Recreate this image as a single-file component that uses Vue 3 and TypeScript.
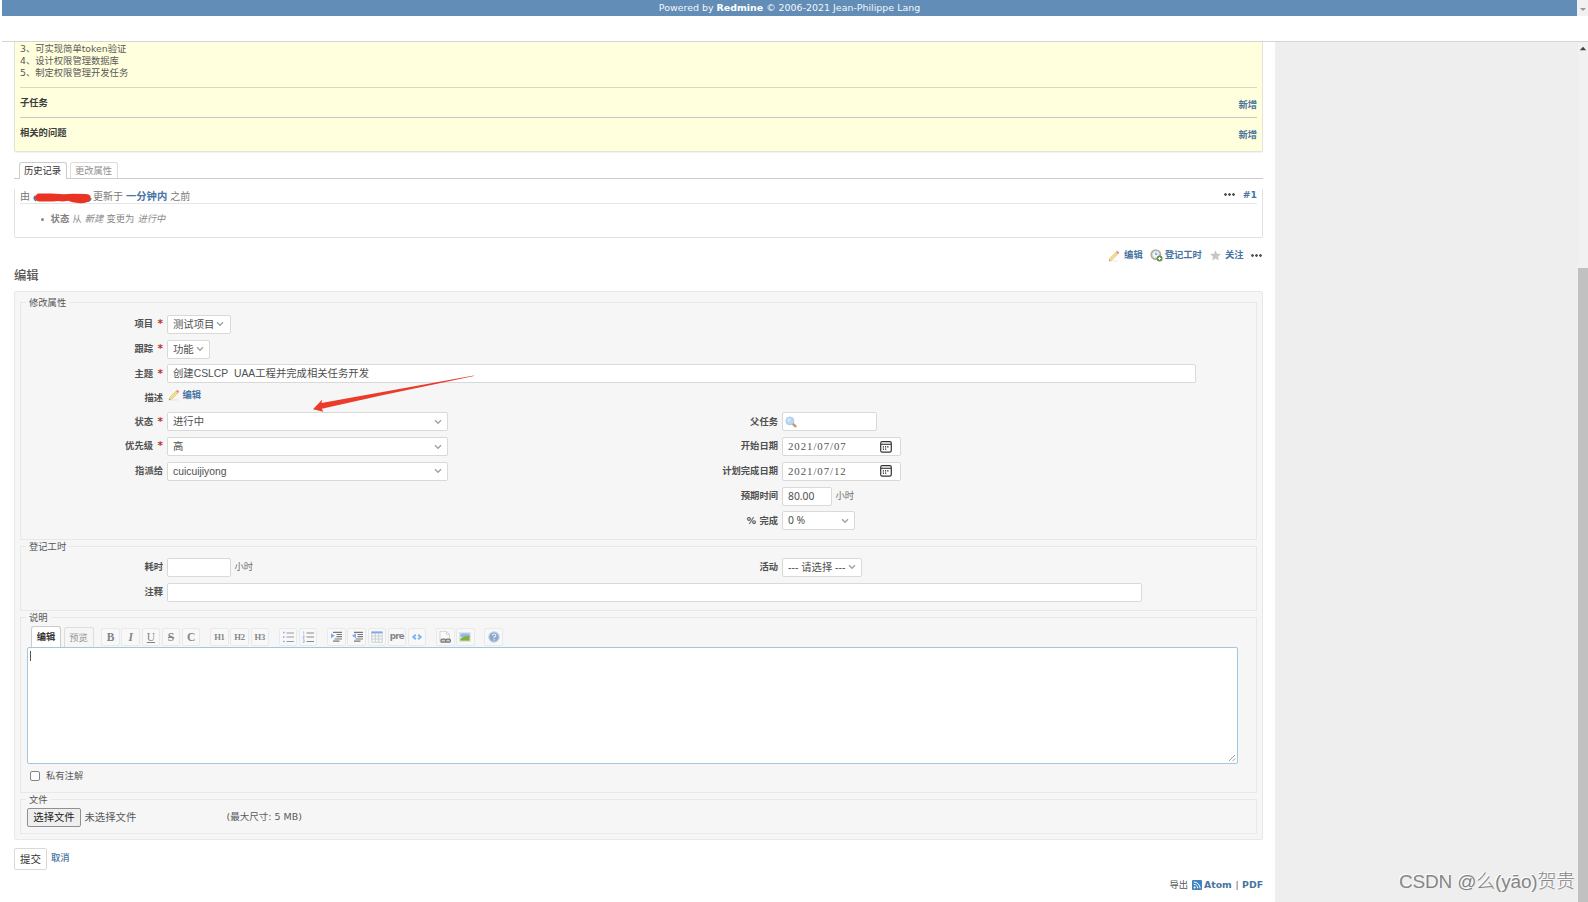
<script setup lang="ts">
interface Tool { id: string; kind: 'serif' | 'head' | 'pre' | 'icon'; text?: string; gap?: boolean }

const notes: string[] = ['3、可实现简单token验证', '4、设计权限管理数据库', '5、制定权限管理开发任务']

const tools: Tool[] = [
  { id: 'bold', kind: 'serif', text: 'B' },
  { id: 'italic', kind: 'serif', text: 'I' },
  { id: 'underline', kind: 'serif', text: 'U' },
  { id: 'strike', kind: 'serif', text: 'S' },
  { id: 'code', kind: 'serif', text: 'C' },
  { id: 'h1', kind: 'head', text: 'H1', gap: true },
  { id: 'h2', kind: 'head', text: 'H2' },
  { id: 'h3', kind: 'head', text: 'H3' },
  { id: 'ul', kind: 'icon', gap: true },
  { id: 'ol', kind: 'icon' },
  { id: 'quote', kind: 'icon', gap: true },
  { id: 'unquote', kind: 'icon' },
  { id: 'table', kind: 'icon' },
  { id: 'pre', kind: 'pre', text: 'pre' },
  { id: 'snippet', kind: 'icon' },
  { id: 'link', kind: 'icon', gap: true },
  { id: 'image', kind: 'icon' },
  { id: 'help', kind: 'icon', gap: true },
]

const leftFields = [
  { label: '状态', required: true, value: '进行中' },
  { label: '优先级', required: true, value: '高' },
  { label: '指派给', required: false, value: 'cuicuijiyong' },
]

const dates = [
  { label: '开始日期', value: '2021/07/07' },
  { label: '计划完成日期', value: '2021/07/12' },
]
</script>

<template>
  <div class="page">
    <header class="top">
      <div class="bar"><span>Powered by <b>Redmine</b> © 2006-2021 Jean-Philippe Lang</span></div>
      <div class="bar-scroll"><svg width="8" height="5" viewBox="0 0 8 5"><path d="M1 1h6L4 4z" fill="#999" /></svg></div>
    </header>
    <div class="strip"></div>

    <div class="body">
      <main class="content">
        <section class="issue">
          <div class="notes"><p v-for="n in notes" :key="n">{{ n }}</p></div>
          <div class="related first"><b>子任务</b><a>新增</a></div>
          <div class="related second"><b>相关的问题</b><a>新增</a></div>
        </section>

        <nav class="tabs"><span class="tab on">历史记录</span><span class="tab">更改属性</span></nav>

        <section class="journal">
          <div class="journal-head">
            <span>由</span>
            <span class="author"><svg width="60" height="12" viewBox="0 0 60 12">
              <path d="M2 4q-2 3 1 5M54 9q3 1 4-3" stroke="#4a78b5" stroke-width="1.5" fill="none" />
              <path d="M5 1.6Q2 3 1.8 5.5 2 9 6 9.6h14l5-.6 5 .4 5-.7q4 2 10 2.2 7 .8 10-1.2 3-2 2.5-5-.5-2.500-5-2.700l-12-.2-10 .5-12-.8z" fill="#ea3323" />
            </svg></span>
            <span>更新于</span><a class="ago">一分钟内</a><span>之前</span>
            <span class="journal-tools"><i class="dots"></i><a>#1</a></span>
          </div>
          <div class="change"><i class="bullet"></i><b>状态</b> 从 <em>新建</em> 变更为 <em>进行中</em></div>
        </section>

        <div class="actions">
          <svg class="pencil" width="12" height="12" viewBox="0 0 12 12"><path d="M2 11h8" stroke="#e8e8e8" /><path d="M1 11l1-3 6-6 2 2-6 6z" fill="#f6dc8a" stroke="#e3c274" stroke-width=".6" /><path d="M8 2l1.3-1.3 2 2L10 4z" fill="#e9868a" /><path d="M1 11l.5-1.500 1 1z" fill="#888" /></svg>
          <a class="a1">编辑</a>
          <svg class="clock" width="13" height="13" viewBox="0 0 13 13"><circle cx="5.8" cy="5.6" r="4.6" fill="#d3e5f5" stroke="#b8ad95" stroke-width="1.7" /><circle cx="5.8" cy="5.6" r="2.600" fill="#f2f8fd" /><path d="M5.800 3.600v2.200l1.500-.8" stroke="#5a82a8" fill="none" stroke-width=".9" /><circle cx="9.600" cy="9.500" r="3" fill="#5d9147" /><path d="M8 9.500h3.200M9.600 7.900v3.200" stroke="#fff" stroke-width="1.100" /></svg>
          <a class="a2">登记工时</a>
          <svg class="star" width="11" height="11" viewBox="0 0 11 11"><path d="M5.500.3L7 3.700l3.800.4L8 6.700l.8 3.900-3.300-2-3.300 2L3 6.700.2 4.100 4 3.700z" fill="#c6c6c6" /></svg>
          <a class="a3">关注</a><i class="dots"></i>
        </div>

        <h3>编辑</h3>

        <form class="box" @submit.prevent>
          <fieldset class="attrs">
            <legend>修改属性</legend>
            <div class="row"><label>项目<u>*</u></label><div class="field w-project">测试项目<svg class="chev" viewBox="0 0 8 6"><path d="M1 1.300l3 3 3-3" /></svg></div></div>
            <div class="row"><label>跟踪<u>*</u></label><div class="field w-tracker">功能<svg class="chev" viewBox="0 0 8 6"><path d="M1 1.300l3 3 3-3" /></svg></div></div>
            <div class="row"><label>主题<u>*</u></label><div class="field w-subject">创建CSLCP&nbsp; UAA工程并完成相关任务开发</div></div>
            <div class="row desc"><label>描述</label>
              <span class="desc-link"><svg width="12" height="12" viewBox="0 0 12 12"><path d="M2 11h8" stroke="#e3e3e3" /><path d="M1 11l1-3 6-6 2 2-6 6z" fill="#f6dc8a" stroke="#e3c274" stroke-width=".6" /><path d="M8 2l1.300-1.300 2 2L10 4z" fill="#e9868a" /><path d="M1 11l.5-1.500 1 1z" fill="#888" /></svg><a>编辑</a></span>
            </div>
            <div class="split">
              <div class="col">
                <div v-for="f in leftFields" :key="f.label" class="row">
                  <label>{{ f.label }}<u v-if="f.required">*</u></label>
                  <div class="field w-wide">{{ f.value }}<svg class="chev" viewBox="0 0 8 6"><path d="M1 1.300l3 3 3-3" /></svg></div>
                </div>
              </div>
              <div class="col right">
                <div class="row"><label>父任务</label><div class="field w-parent"><svg width="12" height="12" viewBox="0 0 12 12"><path d="M7.500 7.500l3 2.800" stroke="#c79a62" stroke-width="2.400" stroke-linecap="round" /><circle cx="4.900" cy="4.900" r="4" fill="#b9d7f3" stroke="#a9c6e4" stroke-width=".8" /><circle cx="4" cy="4" r="1.800" fill="#d5e8fa" /></svg></div></div>
                <div v-for="d in dates" :key="d.label" class="row">
                  <label>{{ d.label }}</label>
                  <div class="field w-date"><span>{{ d.value }}</span><svg width="12" height="12" viewBox="0 0 12 12"><rect x=".7" y=".7" width="10.600" height="10.400" rx="1.600" fill="none" stroke="#333" stroke-width="1.200" /><path d="M1 3.300h10" stroke="#333" stroke-width="1.100" /><path d="M5 5.900h1.200M7.200 5.900h1.300M2.800 5.900h1.200M2.800 8.200h1.200M5 8.200h1.200" stroke="#222" stroke-width="1.300" /></svg></div>
                </div>
                <div class="row"><label>预期时间</label><div class="field num w-hours">80.00</div><span class="unit">小时</span></div>
                <div class="row"><label>% 完成</label><div class="field num w-done">0 %<svg class="chev" viewBox="0 0 8 6"><path d="M1 1.300l3 3 3-3" /></svg></div></div>
              </div>
            </div>
          </fieldset>

          <fieldset class="time">
            <legend>登记工时</legend>
            <div class="split">
              <div class="col"><div class="row"><label>耗时</label><div class="field w-project"></div><span class="unit">小时</span></div></div>
              <div class="col right"><div class="row"><label>活动</label><div class="field w-activity">--- 请选择 ---<svg class="chev" viewBox="0 0 8 6"><path d="M1 1.300l3 3 3-3" /></svg></div></div></div>
            </div>
            <div class="row"><label>注释</label><div class="field w-comment"></div></div>
          </fieldset>

          <fieldset class="note">
            <legend>说明</legend>
            <div class="toolbar">
              <span class="mode on">编辑</span><span class="mode">预览</span>
              <span v-for="t in tools" :key="t.id" class="tool" :class="[t.kind, t.id, { gap: t.gap }]">
                <template v-if="t.text">{{ t.text }}</template>
                <svg v-else width="12" height="12" viewBox="0 0 12 12">
                  <template v-if="t.id === 'ul'"><path d="M4.500 2H12M4.500 6H12M4.500 10.500H12" stroke="#999" /><path d="M1 1.500h1.500M1 6h1.500M1 10.500h1.500" stroke="#83aaf0" stroke-width="1.700" /></template>
                  <template v-else-if="t.id === 'ol'"><path d="M4.500 2H12M4.500 6H12M4.500 10.500H12" stroke="#888" /><path d="M1.700.3v3M.8 4.800h1.400v1.200H1v1.200h1.400M.8 8.700h1.400v2.800H.8M1 10h1" stroke="#9dbcf3" stroke-width=".9" fill="none" /></template>
                  <template v-else-if="t.id === 'quote' || t.id === 'unquote'"><path d="M3 1.300h9M6.500 3.500H12M6.500 5.700H12M4.500 8H12M3 10.200h6.500" stroke="#777" stroke-width="1.200" /><path v-if="t.id === 'quote'" d="M1 2.300l3.800 2.500L1 7.300z" fill="#80a9ef" /><path v-else d="M5 2.300L1 4.800l4 2.500z" fill="#80a9ef" /></template>
                  <template v-else-if="t.id === 'table'"><path d="M.8 1v10.300h10.400V1M.8 5h10.400M.8 8h10.400M4.300 2v9M7.700 2v9" stroke="#c3c6ca" stroke-width=".8" fill="none" /><path d="M.4 1.400h11.200" stroke="#80a9ef" stroke-width="2" /></template>
                  <template v-else-if="t.id === 'snippet'"><path d="M4.800 3.800L2.300 6l2.500 2.200M7.200 3.800L9.700 6 7.200 8.200" stroke="#74b2f3" stroke-width="1.900" fill="none" /></template>
                  <template v-else-if="t.id === 'link'"><path d="M1 .3h6.500L10.500 3.500v7.700H1z" fill="#fbfbfb" stroke="#ccc" stroke-width=".8" /><path d="M7.500.5v3h3" fill="none" stroke="#ccc" stroke-width=".8" /><rect x="2" y="8.200" width="4.800" height="3" rx="1.300" fill="#ccc" stroke="#777" stroke-width="1.200" /><rect x="6.800" y="8.200" width="4.600" height="3" rx="1.300" fill="#ccc" stroke="#777" stroke-width="1.200" /></template>
                  <template v-else-if="t.id === 'image'"><rect x=".6" y="1.600" width="10.800" height="8.800" fill="#fff" stroke="#d9d9d9" stroke-width=".7" /><path d="M1.300 2.300h9.400v4H1.300z" fill="#8db8f0" /><path d="M1.300 7.500l4-2 5.400-.8v5.100H1.300z" fill="#8aae3c" /></template>
                  <template v-else><circle cx="6" cy="6" r="5.200" fill="#8ba9d0" stroke="#c3d2e5" stroke-width="1.200" /><path d="M4.300 4.600q0-1.600 1.800-1.600 1.700 0 1.700 1.400 0 1-1.700 1.700v1.200M6.100 8.100v1.300" fill="none" stroke="#e2ebf6" stroke-width="1.200" /></template>
                </svg>
              </span>
            </div>
            <div class="area"><i class="caret"></i><svg class="grip" width="8" height="8" viewBox="0 0 8 8"><path d="M1 7l6-6M4.500 7.200L7 4.700" stroke="#888" stroke-width=".8" /></svg></div>
            <div class="private"><i></i>私有注解</div>
          </fieldset>

          <fieldset class="files">
            <legend>文件</legend>
            <div class="file-row"><span class="choose">选择文件</span><span class="none">未选择文件</span><span class="limit">(最大尺寸: 5 MB)</span></div>
          </fieldset>
        </form>

        <div class="submit"><span class="btn">提交</span><a>取消</a></div>

        <div class="export">
          <span>导出</span>
          <svg width="10" height="10" viewBox="0 0 10 10"><rect width="10" height="10" rx="1" fill="#3f83bf" /><circle cx="2.600" cy="7.500" r="1" fill="#fff" /><path d="M1.800 4.400a3.800 3.800 0 013.900 3.900M1.800 2a6.300 6.300 0 016.300 6.300" stroke="#fff" stroke-width="1" fill="none" /></svg>
          <a class="atom">Atom</a><span class="pipe">|</span><a>PDF</a>
        </div>
      </main>
      <aside class="side"></aside>
      <div class="scroll"><svg width="8" height="5" viewBox="0 0 8 5"><path d="M.8 4.200h6.400L4 .8z" fill="#444" /></svg><div class="thumb"></div></div>
    </div>

    <svg class="arrow" width="164" height="40" viewBox="0 0 164 40"><path d="M161 .4L8.500 28.100l.8-3.700L0 34.300l10.300 2.500-1.500-3L68 20.500 161 1z" fill="#eb3b2a" /></svg>
    <div class="watermark">CSDN @么(yāo)贺贵</div>
  </div>
</template>

<style>
body { margin: 0; background: #fff; }
</style>

<style scoped>
* { box-sizing: border-box; }
.page { position: relative; width: 1588px; height: 902px; overflow: hidden; background: #fff; color: #5a5a5a; font: 9.3px/12.5px "DejaVu Sans", "Noto Sans CJK SC", sans-serif; }
svg { display: block; flex: none; }
a { color: #4874a2; font-weight: bold; }
b { color: #3c3c3c; }
i { flex: none; }
.top { display: flex; height: 16px; padding-left: 2px; }
.bar { width: 1575px; background: #628db6; color: #f4f7fa; text-align: center; line-height: 15px; font-size: 9.45px; }
.bar b { color: #fff; }
.bar-scroll { flex: 1; background: #f1f1f1; padding: 7px 0 0 2px; }
.strip { height: 26px; margin-left: 2px; border-bottom: 1px solid #d5d5d5; }
.body { display: flex; height: 860px; }
.content { width: 1275px; padding: 0 12px 0 14px; flex: none; }
.side { flex: 1; background: #eee; }
.scroll { width: 10px; background: #f1f1f1; padding-top: 4px; }
.scroll svg { margin-left: 1px; }
.thumb { margin-top: 217px; height: 640px; background: #c1c1c1; }

.issue { height: 110px; background: #ffffdd; border: solid #e3e3d9; border-width: 0 1px 1px; border-radius: 0 0 2px 2px; padding: 0 5px; box-shadow: 0 1px 1px #f2f2f2; }
.notes { height: 46px; padding-top: .6px; border-bottom: 1px solid #d7d7c6; }
p { margin: 0; line-height: 12.4px; }
.related { display: flex; justify-content: space-between; }
.related.first { height: 30px; border-bottom: 1px solid #c8c8c8; }
.related b { padding-top: 9px; }
.related a { padding-top: 11px; }

.tabs { display: flex; gap: 3px; height: 27px; padding: 10px 0 0 4.5px; border-bottom: 1px solid #ccc; }
.tab { height: 16px; width: 48px; border: 1px solid #ddd; border-bottom: 0; border-radius: 3px 3px 0 0; text-align: center; color: #909090; line-height: 15.5px; }
.tab.on { height: 17px; background: #fff; color: #333; border-color: #ccc; position: relative; }
.journal { margin-top: 10px; height: 49px; border: 1px solid #e2e2e2; border-top: 0; border-radius: 0 0 2px 2px; padding: 0 5px; }
.journal-head { display: flex; height: 15px; border-bottom: 1px solid #e6e6e6; font-size: 10px; line-height: 15px; color: #777; }
.author { width: 60px; margin: 2.5px 0 0 3px; height: 12px; }
.ago { margin: 0 3px; font-size: 10.3px; }
.journal-tools { margin-left: auto; display: flex; gap: 8px; align-items: center; height: 11px; font-size: 9.3px; }
.dots { width: 11px; height: 3px; background: radial-gradient(circle at 1.5px 1.5px, #555 1px, transparent 1.6px) 0 0 / 4px 3px; }
.change { display: flex; gap: 3.1px; align-items: center; height: 31px; padding-left: 20.5px; color: #888; }
.change b { color: #808080; }
.change em { color: #888; }
.bullet { width: 3px; height: 3px; border-radius: 50%; background: #888; margin-right: 4px; }

.actions { display: flex; justify-content: flex-end; align-items: center; height: 12px; margin-top: 11.5px; padding-right: 1px; }
.a1 { margin: 0 7px 0 4px; }
.a2 { margin: 0 8px 0 2px; }
.a3 { margin: 0 7.5px 0 4px; }
h3 { margin: 6px 0 0; height: 23.5px; line-height: 16px; font-size: 12.3px; font-weight: 500; color: #555; }

.box { height: 549px; border: 1px solid #e8e8e8; border-radius: 2px; background: #f6f6f6; padding: 4px 5px 0; }
fieldset { display: block; min-width: 0; margin: 0; padding: 0; border: 1px solid #e8e8e8; }
legend { margin-left: 5px; padding: 0 3px; height: 13px; line-height: 13px; color: #555; }
.attrs { height: 244px; padding-top: 3px; }
.time { height: 71px; padding-top: 2px; }
.note { height: 181.5px; }
.files { height: 41px; }
.row { display: flex; align-items: center; height: 24.8px; }
label { width: 142px; margin-right: 3.5px; text-align: right; font-weight: bold; color: #505050; flex: none; }
u { text-decoration: none; color: #b33; margin-left: 4.5px; font-size: 10.5px; line-height: 10px; }
.desc { height: 23px; }
.desc label { padding-top: 1px; }
.desc-link { display: flex; gap: 3px; padding-left: 1px; margin-top: -5px; }
.split { display: flex; }
.col { width: 617px; }
.right label { width: 140px; margin-right: 3.5px; }
.field { display: flex; align-items: center; height: 19px; border: 1px solid #d9d9d9; border-radius: 2px; background: #fff; padding: 0 5.5px; color: #505050; font: 10.35px/17px "Liberation Sans", "Noto Sans CJK SC", sans-serif; white-space: pre; }
.chev { width: 8px; height: 6px; margin-left: auto; fill: none; stroke: #a0a0a0; stroke-width: 1.3; }
.w-project { width: 64px; }
.w-tracker { width: 43.5px; }
.w-subject { width: 1029.5px; }
.w-wide { width: 281.5px; }
.w-parent { width: 95px; padding-left: 2px; }
.w-date { width: 119px; padding-right: 8px; justify-content: space-between; }
.w-date span { font: 10.8px/17px "Liberation Serif", serif; letter-spacing: .95px; color: #555; }
.num { font-family: "Noto Sans", sans-serif; }
.w-hours { width: 50px; }
.w-done { width: 73.5px; }
.w-activity { width: 80.5px; }
.w-comment { width: 975.5px; }
.unit { margin-left: 4px; color: #707070; }

.toolbar { display: flex; height: 23px; padding: 2px 0 0 10px; align-items: flex-end; }
.mode { width: 30px; height: 20px; margin-right: 2.5px; border: 1px solid #ddd; border-bottom: 0; border-radius: 3px 3px 0 0; text-align: center; line-height: 20px; color: #999; flex: none; }
.mode.on { position: relative; height: 22px; margin-bottom: -1px; background: #fff; border-color: #ccc; color: #333; font-weight: bold; }
.mode:nth-child(2) { margin-right: 7.8px; }
.tool { display: flex; align-items: center; justify-content: center; width: 18.4px; height: 18.4px; margin: 0 1.8px 1px 0; border: 1px solid #e9e9e9; border-radius: 2px; background: #f8f8f8; color: #858585; flex: none; }
.tool.gap { margin-left: 8px; }
.serif { font: bold 11.5px/16px "Liberation Serif", serif; }
.head { font: bold 8.6px/16px "Liberation Serif", serif; letter-spacing: -.2px; }
.pre { font: bold 8.6px/14px "DejaVu Sans", sans-serif; letter-spacing: -.7px; padding-bottom: 2px; }
.italic { font-style: italic; }
.underline { text-decoration: underline; font-weight: normal; }
.strike { text-decoration: line-through; }
.area { position: relative; width: 1211px; height: 117px; margin-left: 6px; border: 1px solid #9fc8e2; border-radius: 2px; background: #fff; }
.caret { display: block; width: 1px; height: 10px; margin: 2.5px 0 0 1.5px; background: #555; }
.grip { position: absolute; right: 1px; bottom: 1px; }
.private { display: flex; align-items: center; height: 24px; padding-left: 9px; }
.private i { width: 10px; height: 10px; border: 1px solid #858585; border-radius: 2px; background: #fff; margin-right: 6px; }
.file-row { display: flex; align-items: center; padding: 2px 0 0 6px; }
.choose { width: 54px; height: 19px; border: 1px solid #909090; border-radius: 2px; background: #efefef; color: #222; font-size: 10.35px; line-height: 17.5px; text-align: center; }
.none { margin-left: 3.5px; width: 142px; font-size: 10.35px; }
.limit { font-size: 9.5px; line-height: 12px; margin-top: -1px; }
.submit { display: flex; height: 22px; margin-top: 8px; }
.btn { width: 33px; height: 22px; border: 1px solid #d9d9d9; border-radius: 2px; text-align: center; line-height: 21px; font-size: 10.5px; color: #333; margin-right: 4px; }
.submit a { line-height: 20px; font-weight: 500; }
.export { display: flex; justify-content: flex-end; align-items: center; height: 12px; margin-top: 9px; }
.export svg { margin: 0 2px 0 4px; }
.pipe { margin: 0 3.6px; }

.arrow { position: absolute; left: 313px; top: 375px; }
.watermark { position: absolute; left: 1399px; top: 868px; width: 176px; font: 300 18.9px/28px "Liberation Sans", "Noto Sans CJK SC", sans-serif; letter-spacing: -.12px; color: #858585; text-shadow: -1px -1px 0 #fff; white-space: nowrap; }
</style>
